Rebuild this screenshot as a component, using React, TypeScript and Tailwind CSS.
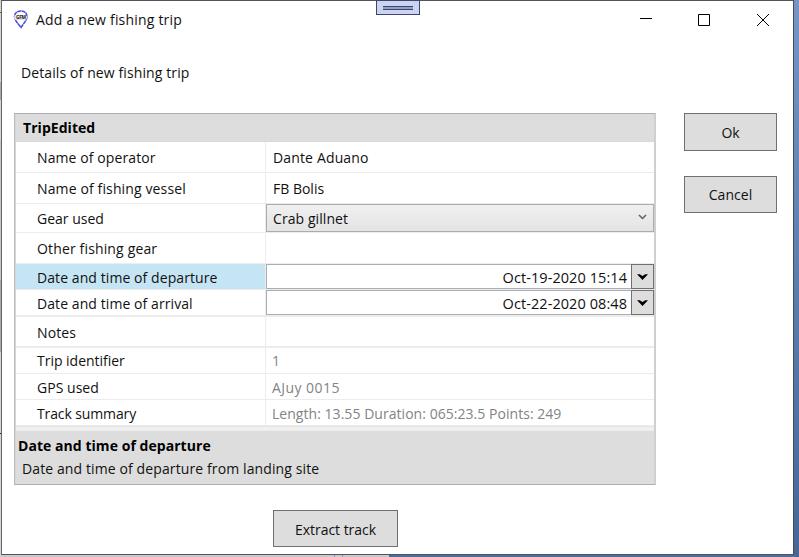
import type { ReactNode } from "react";

type RowProps = { label: string; height: string; track: string; selected?: boolean; thick?: boolean; children?: ReactNode };

function Row({ label, height, track, selected, thick, children }: RowProps) {
  return (
    <div className={`flex ${height} border-[#ececec] ${thick ? "border-b-2" : "border-b"}`}>
      <div className={`flex w-[250px] shrink-0 items-center border-r border-[#ececec] pt-[2px] pl-[21px] ${selected ? "bg-[#c5e5f5]" : ""}`}>
        <span className={track}>{label}</span>
      </div>
      <div className="flex min-w-0 flex-1 items-center">{children}</div>
    </div>
  );
}

function DateBox({ value }: { value: string }) {
  return (
    <div className="flex h-[25px] w-[388px] self-start border border-[#abadb3] bg-white">
      <div className="flex flex-1 items-center justify-end pt-[2px] pr-[4px]">
        <span className="text-[14.5px] tracking-[0.07px]">{value}</span>
      </div>
      <div className="-my-px -mr-px flex w-[23px] items-center justify-center border border-[#707070] bg-[#dddddd]">
        <svg width="11" height="6" viewBox="0 0 11 6"><path d="M0 0.3h2.8L5.5 2.1 8.2.3H11L5.5 6z" fill="#000" /></svg>
      </div>
    </div>
  );
}

function Button({ size, children }: { size: string; children: ReactNode }) {
  return (
    <button className={`flex items-center justify-center border border-[#707070] bg-[#dddddd] ${size}`}>{children}</button>
  );
}

export default function App() {
  return (
    <div className="relative flex h-[557px] w-[799px] overflow-hidden bg-[#4d6d9d] font-['Open_Sans','Noto_Sans',sans-serif] text-[14px] leading-[20px] whitespace-nowrap text-[#111]">
      <div className="flex h-full w-px shrink-0 flex-col bg-[#d5d5d5]">
        <div className="mt-[12px] h-px bg-[#555]" />
        <div className="mt-[69px] h-[18px] bg-[#aaa]" />
        <div className="mt-[40px] h-[140px] bg-[#c5c5c5]" />
        <div className="h-[72px] bg-[#aaa]" />
        <div className="mt-[81px] h-px bg-[#222]" />
      </div>
      <div className="flex h-full flex-1 flex-col">
        <div className="flex h-[555px] w-[793px] flex-col border border-t-[#51535c] border-r-[#444b5a] border-b-[#50545d] border-l-[#666] bg-white">
          <header className="flex h-[37px] items-center">
            <svg className="ml-[11px]" width="16" height="20" viewBox="0 0 16 20">
              <path d="M8 1C4.2 1 1.500 3.200 1.500 6.800c0 3.500 3.500 6.500 6.500 10.700 2.700-4.200 6-7.200 6-10.700C14 3.200 11.800 1 8 1z" fill="#fff" stroke="#4a4ae0" strokeWidth="1.500" strokeDasharray="4 .4" />
              <rect x="1" y="5" width="13" height="5" rx="2.500" fill="#e2e2e2" />
              <text x="3" y="9.300" fontSize="4.800" fontWeight="700" fill="#222" textLength="10">GFM</text>
            </svg>
            <span className="ml-[7px] tracking-[0.2px]">Add a new fishing trip</span>
            <svg className="ml-auto" width="130" height="14" viewBox="0 0 130 14" fill="none" stroke="#000">
              <path d="M0 5.500h12M58.500 1.500h11v11h-11zM117 1l12 12M129 1l-12 12" />
            </svg>
            <span className="w-[23px]" />
          </header>
          <div className="flex h-[75px] items-start pt-[25px] pl-[19px]">
            <span className="tracking-[0.11px]">Details of new fishing trip</span>
          </div>
          <main className="flex pl-[12px]">
            <section className="h-[372px] w-[642px] border border-r-2 border-[#acaeb1] border-r-[#cfcfd1] border-l-[#bcbcbc]">
              <div className="h-full border-l border-[#d6d6d6]">
                <div className="flex h-[28px] items-center border-b border-[#d8d8d8] bg-[#dddddd] pl-[7px] font-bold text-black">
                  <span className="tracking-[0.05px]">TripEdited</span>
                </div>
                <Row label="Name of operator" height="h-[31px]" track="tracking-[0.1px]"><span className="pt-[2px] pl-[7px] tracking-[0.15px]">Dante Aduano</span></Row>
                <Row label="Name of fishing vessel" height="h-[31px]" track="tracking-[0.13px]"><span className="pt-[2px] pl-[7px]">FB Bolis</span></Row>
                <Row label="Gear used" height="h-[29px]" track="">
                  <div className="flex h-[28px] w-[388px] items-center border border-[#acacac] bg-gradient-to-b from-[#f0f0f0] to-[#e4e4e4] pr-[6px] pl-[6px]">
                    <span className="pt-[2px] tracking-[0.08px]">Crab gillnet</span>
                    <svg className="mb-[3px] ml-auto" width="9" height="6" viewBox="0 0 9 6" fill="none" stroke="#606060" strokeWidth="1.500"><path d="M1 1l3.500 3.500L8 1" /></svg>
                  </div>
                </Row>
                <Row label="Other fishing gear" height="h-[31px]" track="tracking-[0.15px]" />
                <Row label="Date and time of departure" height="h-[26px]" track="tracking-[0.08px]" selected><DateBox value="Oct-19-2020 15:14" /></Row>
                <Row label="Date and time of arrival" height="h-[27px]" track="tracking-[0.08px]" thick><DateBox value="Oct-22-2020 08:48" /></Row>
                <Row label="Notes" height="h-[31px]" track="tracking-[0.1px]" thick />
                <Row label="Trip identifier" height="h-[26px]" track="pb-px tracking-[-0.02px]"><span className="pt-px pl-[6px] text-[#838383]">1</span></Row>
                <Row label="GPS used" height="h-[26px]" track="tracking-[0.03px]"><span className="pt-[2px] pl-[6px] tracking-[0.45px] text-[#838383]">AJuy 0015</span></Row>
                <Row label="Track summary" height="h-[26px]" track="tracking-[-0.12px]"><span className="pt-[2px] pl-[6px] tracking-[0.04px] text-[#838383]">Length: 13.55 Duration: 065:23.5 Points: 249</span></Row>
                <div className="h-[5px] border-y border-t-[#e4e4e4] border-b-[#ececec] bg-[#f0f0f0]" />
                <div className="h-[53px] bg-[#dddddd] pt-[5px] pl-[2px]">
                  <div className="leading-[20px] font-bold text-black"><span className="tracking-[0.05px]">Date and time of departure</span></div>
                  <div className="pt-[3px] pl-[4px]"><span className="tracking-[0.11px]">Date and time of departure from landing site</span></div>
                </div>
              </div>
            </section>
            <div className="ml-[28px] flex flex-col gap-[25px]">
              <Button size="h-[38px] w-[93px] pt-[2px]">Ok</Button>
              <Button size="h-[37px] w-[93px]"><span className="tracking-[0.05px]">Cancel</span></Button>
            </div>
          </main>
          <div className="mt-[25px] pl-[271px]">
            <Button size="h-[37px] w-[125px] pt-[2px]"><span className="tracking-[-0.04px]">Extract track</span></Button>
          </div>
        </div>
        <div className="flex h-[2px] w-[388px] justify-end gap-[7px] bg-[#c9c9cb] pr-[46px]">
          <span className="h-full w-px bg-[#8a92c8]" />
          <span className="h-full w-px bg-[#8a92c8]" />
        </div>
      </div>
      <div className="absolute top-0 left-[794px] h-full w-[5px] bg-gradient-to-b from-[#7595c5] to-[#466696]" />
      <div className="absolute top-0 left-[376px] flex h-[15px] w-[44px] items-center justify-center border border-[#40446f] bg-[#cad5f2]">
        <div className="h-[4px] w-[30px] border-y border-[#40446f] bg-[#94a2c8]" />
      </div>
    </div>
  );
}
